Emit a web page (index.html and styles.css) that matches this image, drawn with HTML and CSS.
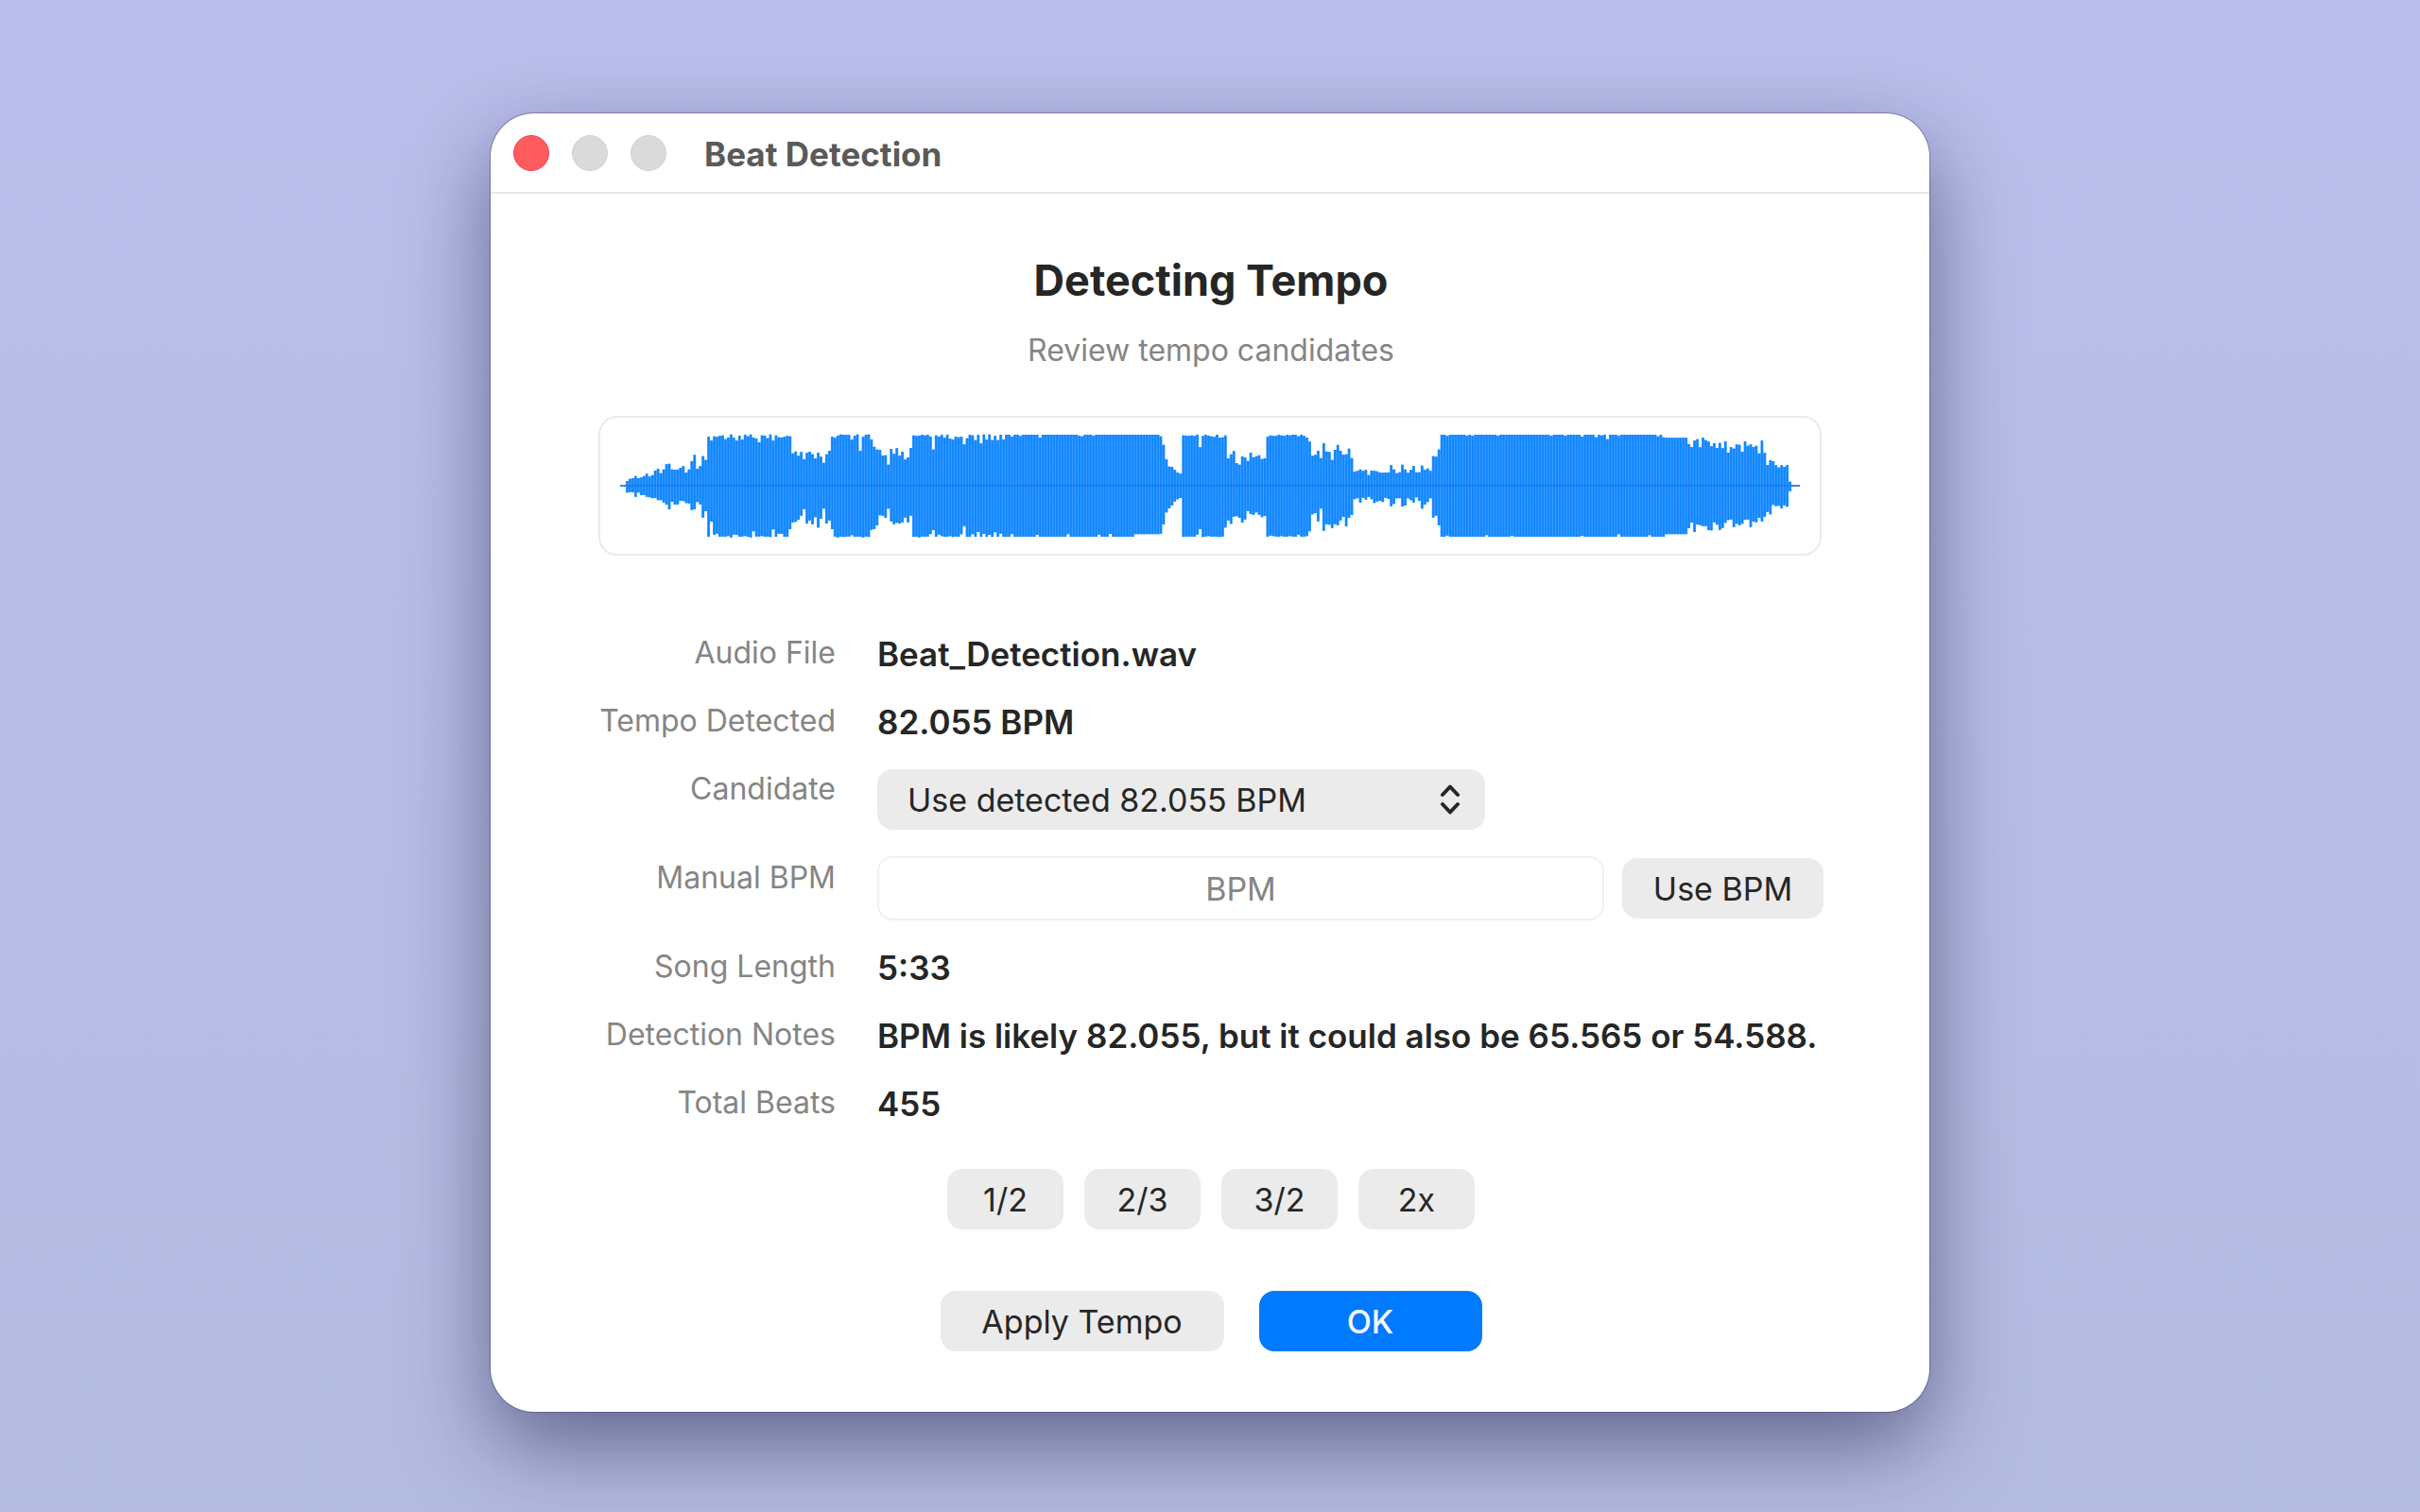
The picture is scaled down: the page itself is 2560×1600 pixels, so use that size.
FILE: index.html
```html
<!DOCTYPE html>
<html lang="en">
<head>
<meta charset="utf-8">
<title>Beat Detection</title>
<link rel="stylesheet" href="styles.css">
</head>
<body>
<main class="window">
  <header class="titlebar">
    <div class="lights">
      <button class="light light-close" aria-label="Close"></button>
      <button class="light" aria-label="Minimize" disabled></button>
      <button class="light" aria-label="Zoom" disabled></button>
    </div>
    <h1 class="window-title">Beat Detection</h1>
  </header>

  <form class="content">
    <h2 class="heading">Detecting Tempo</h2>
    <p class="subheading">Review tempo candidates</p>

    <div class="waveform">
      <svg class="wave" viewBox="0 85 3742 330" preserveAspectRatio="none" aria-hidden="true">
        <path class="wave-fill" id="wave-fill"/>
        <path class="wave-bars" id="wave-bars"/>
        <path class="wave-axis" d="M0 250H3742"/>
      </svg>
    </div>

    <div class="rows">
      <span class="label">Audio File</span>
      <span class="value">Beat_Detection.wav</span>

      <span class="label">Tempo Detected</span>
      <span class="value">82.055 BPM</span>

      <label class="label" for="candidate">Candidate</label>
      <div class="control">
        <div class="picker">
          <select class="select" id="candidate">
            <option>Use detected 82.055 BPM</option>
            <option>Use 65.565 BPM</option>
            <option>Use 54.588 BPM</option>
          </select>
          <svg class="chevrons" viewBox="0 0 24 32" aria-hidden="true"><path d="M4 11 12 2.500 20 11M4 21 12 29.500 20 21"/></svg>
        </div>
      </div>

      <label class="label" for="bpm">Manual BPM</label>
      <div class="control">
        <input class="field" id="bpm" type="text" placeholder="BPM">
        <button class="button use" type="button">Use BPM</button>
      </div>

      <span class="label">Song Length</span>
      <span class="value">5:33</span>

      <span class="label">Detection Notes</span>
      <span class="value">BPM is likely 82.055, but it could also be 65.565 or 54.588.</span>

      <span class="label">Total Beats</span>
      <span class="value">455</span>
    </div>

    <div class="factors">
      <button class="button factor" type="button">1/2</button>
      <button class="button factor" type="button">2/3</button>
      <button class="button factor" type="button">3/2</button>
      <button class="button factor" type="button">2x</button>
    </div>

    <div class="actions">
      <button class="button apply" type="button">Apply Tempo</button>
      <button class="button ok" type="button">OK</button>
    </div>
  </form>
</main>
<script src="wave.js"></script>
</body>
</html>
```
FILE: styles.css
```css
* {
  box-sizing: border-box;
}

body {
  margin: 0;
  min-height: 100vh;
  padding: 120px 24px 105px;
  background: linear-gradient(#babeeb, #b4bbe1);
  color: #262626;
  font-family: Inter, "Liberation Sans", sans-serif;
  font-size: 34px;
  line-height: 44px;
}

button,
input,
select {
  margin: 0;
  border: 0;
  color: inherit;
  font: inherit;
}

.window {
  max-width: 1522px;
  margin: 0 auto;
  border-radius: 46px;
  background: #fff;
  box-shadow: 0 0 0 1px rgba(40, 40, 90, 0.35), 0 36px 90px rgba(20, 20, 60, 0.5);
}

.titlebar {
  display: flex;
  align-items: center;
  gap: 40px;
  height: 85px;
  padding: 0 24px;
  border-bottom: 2px solid #e6e6e6;
}

.lights {
  display: flex;
  gap: 24px;
}

.light {
  width: 38px;
  height: 38px;
  padding: 0;
  border: 1px solid #d2d2d2;
  border-radius: 50%;
  background: #dadada;
}

.light-close {
  border-color: #ff3b46;
  background: #ff5c60;
}

.window-title {
  margin: 0;
  padding-top: 2px;
  color: #5a5a5a;
  font-size: 35px;
  font-weight: 700;
}

.content {
  padding: 64px 112px 64px 114px;
}

.heading {
  margin: 0;
  font-size: 45px;
  font-weight: 700;
  line-height: 56px;
  text-align: center;
}

.subheading {
  margin: 24px 0 47px;
  color: #858585;
  font-size: 32px;
  text-align: center;
}

.waveform {
  height: 148px;
  margin-right: 2px;
  padding: 17px 21px;
  border: 2px solid #ebebeb;
  border-radius: 20px;
}

.wave {
  display: block;
  width: 100%;
  height: 110px;
}

.wave-fill {
  fill: #3b9aff;
}

.wave-bars {
  fill: none;
  stroke: #0b85ff;
  stroke-width: 5;
}

.wave-axis {
  fill: none;
  stroke: rgba(20, 95, 185, 0.35);
  stroke-width: 6;
}

.rows {
  display: grid;
  grid-template-columns: 251px 1fr;
  gap: 28px 44px;
  margin-top: 81px;
}

.label {
  color: #858585;
  font-size: 32px;
  text-align: right;
  white-space: nowrap;
}

.value {
  height: 44px;
  font-size: 35px;
  font-weight: 600;
  line-height: 46px;
  white-space: nowrap;
}

.control {
  display: flex;
  align-items: center;
  gap: 19px;
  height: 66px;
}

.picker {
  position: relative;
  width: 643px;
}

.select {
  display: block;
  width: 100%;
  height: 64px;
  padding: 2px 80px 0 32px;
  border-radius: 16px;
  background: #ebebeb;
  appearance: none;
}

.chevrons {
  position: absolute;
  top: 16px;
  right: 25px;
  width: 24px;
  height: 32px;
  fill: none;
  stroke: #262626;
  stroke-width: 4;
  stroke-linecap: round;
  stroke-linejoin: round;
  pointer-events: none;
}

.field {
  flex: 1;
  min-width: 0;
  height: 68px;
  border: 2px solid #f0f0f0;
  border-radius: 16px;
  background: #fff;
  text-align: center;
}

.field::placeholder {
  color: #858585;
  opacity: 1;
}

.button {
  height: 64px;
  padding: 2px 0 0;
  border-radius: 16px;
  background: #ebebeb;
}

.use {
  width: 213px;
}

.factors,
.actions {
  display: flex;
  justify-content: center;
}

.factors {
  gap: 22px;
  margin-top: 48px;
}

.factor {
  width: 123px;
}

.actions {
  gap: 37px;
  margin-top: 65px;
}

.apply {
  width: 300px;
}

.ok {
  width: 236px;
  background: #007aff;
  color: #fff;
  font-weight: 500;
}
```
FILE: wave.js
```js
// Each section of the track: index of its first bar, upper peaks, lower peaks.
// A list shorter than its section holds its last value to the section's end;
// "y*n" repeats a value n times.
const sections = [
  [0, "248", "252"],
  [2,
    "235 228 226 219 226 224 219 212 221 216 202 196 210 198 182 180 198 199 198 193 188 208 198 172 152 196 188 156 168",
    "272 270 271 285 272 280 279 285 287 290 288 296 296 303 310 325 301 310 309 298 299 305 306 327 325 302 309 351 331"],
  [31,
    "94 107 93 95 92 90 102 97 87 98 107 91 104 88 93 87 97 100 112 90 91 99 87 107 90 96 97 95 92 93",
    "412 364 405 402 412 411 412 410 414 405 406 412 411 410 412 414 395 411 411 410 412 411 413 389 412 402 403 412 412 388"],
  [61,
    "147 141 155 143 166 146 142 150 163 145 158 177 150 139",
    "366 365 358 345 324 370 360 372 350 383 355 323 370 360"],
  [75,
    "95 98 91 87 88 88 89 104 92 87 139 95 88 87 103",
    "388 411 414 411 413 412 411 407 412 411 412 414 411 413 390"],
  [90,
    "126 135 136 154 153 183 133 149 131 155 142 166 160 130",
    "387 376 344 345 352 323 363 372 368 370 366 351 366 345"],
  [104,
    "90 92 91 88 90 88 94 135 90 94 88 97 88 101 103 94 96 94 119 99 88 90 105 88 116 87 104 87 105 92 105 88 103",
    "412 412 414 411 412 411 404 391 412 405 410 412 412 410 413 411 412 404 378 412 412 404 412 397 412 403 412 406 412 398 412 402 412"],
  [137,
    "88*2 94 88*2 92 88*6 98 88*13 92 93 88*3 91 88*20",
    "412*2 404 412*8 406 412*10 404 412*10 405 412*3 403 412*8 404"],
  [192,
    "93 120 166 189 190 200 208 212 210",
    "402 373 335 322 312 300 293 289 287"],
  [200,
    "90 91 92 90 92 88 128 92 88 91 93 95 88 98 96 90",
    "412 411 412 411 412 405 388 413 411 410 412 411 412 413 411 383"],
  [216,
    "163 150 140 178 183 157 160 171 145 160 156 153 165 163",
    "360 371 348 347 352 367 357 330 340 342 335 342 350 346"],
  [230,
    "95 90 92 92 88 90 92 88 90 88 88 93 88 92 97 110",
    "412 408 410 411 412 410 412 411 410 411 412 405 411 412 410 395"],
  [246,
    "155 152 139 162 115 141 143 168 136 120 139 152 150 132 162",
    "341 337 363 323 393 372 374 384 372 375 360 349 379 352 343"],
  [261,
    "205 203 198 203 200 216 202 203 204 208 209 208 208 185 198 210 207 183 198 209",
    "293 290 303 288 294 285 293 305 300 298 302 288 292 315 308 290 290 316 313 290"],
  [281,
    "200 187 207 207 186 200 195 203 156 158 135",
    "296 303 287 298 323 310 302 290 351 345 375"],
  [292,
    "88*2 92 88*6 91 88 92 88*8 91 88*18 92 88*4 91 88*5 94 88*4 96 88 90 88 102 88*3 92 88*13 93 88 96 98",
    "412*2 408 412*13 407 412*8 409 412*24 409 412*12 404 412*10 407 412*5 404"],
  [380,
    "118 127 107 102 128 98 105 110 125 115 130 114 131 109 145 128 132 119 120 142 109 123 119 127 123 147 107 146 184 169 172 185 192 185 190 185",
    "385 367 397 373 375 378 378 391 392 366 374 390 384 368 359 357 381 371 376 371 358 357 381 364 366 352 363 348 333 341 311 315 314 322 312 317"],
  [416, "237 248", "267 252"],
];

const WIDTH = 3742;
const COUNT = 420;
const PITCH = WIDTH / COUNT;

const expand = (text) => text.split(" ").flatMap((token) => {
  const [y, times = 1] = token.split("*").map(Number);
  return Array(times).fill(y);
});

let fill = "";
let bars = "";
sections.forEach(([start, upper, lower], index) => {
  const end = index + 1 < sections.length ? sections[index + 1][0] : COUNT;
  const peaks = expand(upper);
  const troughs = expand(lower);
  for (let i = start; i < end; i += 1) {
    const peak = peaks[Math.min(i - start, peaks.length - 1)];
    const trough = troughs[Math.min(i - start, troughs.length - 1)];
    const left = i * PITCH;
    fill += `M${left} ${peak}H${left + PITCH}V${trough}H${left}Z`;
    bars += `M${left + PITCH / 2} ${peak}V${trough}`;
  }
});

document.getElementById("wave-fill").setAttribute("d", fill);
document.getElementById("wave-bars").setAttribute("d", bars);
```
